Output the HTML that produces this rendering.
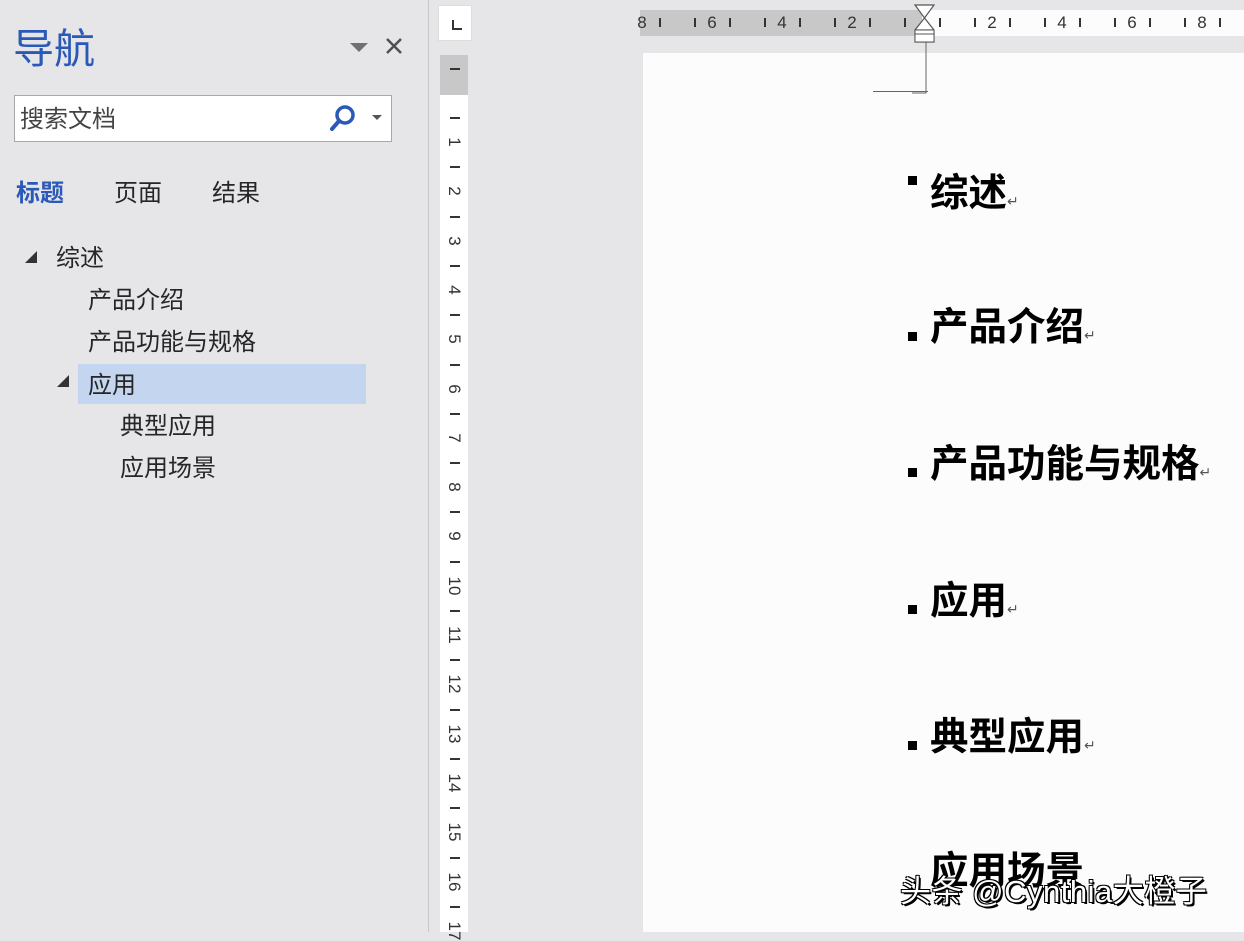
<!DOCTYPE html>
<html><head><meta charset="utf-8"><style>
*{margin:0;padding:0;box-sizing:border-box}
body{width:1244px;height:932px;overflow:hidden;background:#e6e5e8;position:relative;font-family:"Liberation Sans","Noto Sans CJK SC",sans-serif}
.a{position:absolute}
.nav{left:0;top:0;width:429px;height:932px;background:#e6e5e8;border-right:1px solid #c9c8cb}
.t{font-size:24px;color:#262626;white-space:nowrap;line-height:1.2}
.h{font-family:"Liberation Sans","Noto Sans CJK SC",sans-serif;font-weight:bold;font-size:38.5px;color:#000;white-space:nowrap;line-height:1}
.b{width:9px;height:9px;background:#000}
.rn{font-size:17px;color:#333;line-height:1}
.vt{width:10px;height:2px;background:#333;left:450px}
.ht{width:2px;height:9px;background:#333;top:18px}
.tri{width:0;height:0;border-left:12px solid transparent;border-bottom:12px solid #333}
</style></head><body>
<div class="a nav"></div>
<div class="a" style="left:13px;top:29px;font-size:41px;color:#2b59b8;line-height:1">导航</div>
<div class="a" style="left:350px;top:43px;width:0;height:0;border-left:9px solid transparent;border-right:9px solid transparent;border-top:9px solid #707070"></div>
<svg class="a" style="left:384px;top:36px" width="20" height="20"><path d="M3 3L17 17M17 3L3 17" stroke="#505050" stroke-width="2.5"/></svg>
<div class="a" style="left:14px;top:95px;width:378px;height:47px;background:#fff;border:1px solid #a8a8a8"></div>
<div class="a t" style="left:20px;top:106px;color:#444">搜索文档</div>
<svg class="a" style="left:328px;top:103px" width="32" height="30"><circle cx="17" cy="12" r="8" fill="none" stroke="#2b59b8" stroke-width="3.5"/><path d="M11 18L4 26" stroke="#2b59b8" stroke-width="4" stroke-linecap="round"/></svg>
<div class="a" style="left:372px;top:115px;width:0;height:0;border-left:5px solid transparent;border-right:5px solid transparent;border-top:5px solid #555"></div>
<div class="a t" style="left:16px;top:180px;color:#2b59b8;font-weight:bold">标题</div>
<div class="a t" style="left:114px;top:180px">页面</div>
<div class="a t" style="left:212px;top:180px">结果</div>
<div class="a tri" style="left:25px;top:251px"></div>
<div class="a t" style="left:56px;top:245px">综述</div>
<div class="a t" style="left:88px;top:287px">产品介绍</div>
<div class="a t" style="left:88px;top:329px">产品功能与规格</div>
<div class="a" style="left:78px;top:364px;width:288px;height:40px;background:#c3d5ef"></div>
<div class="a tri" style="left:57px;top:375px"></div>
<div class="a t" style="left:88px;top:372px">应用</div>
<div class="a t" style="left:120px;top:413px">典型应用</div>
<div class="a t" style="left:120px;top:455px">应用场景</div>
<!-- vertical ruler -->
<div class="a" style="left:438px;top:5px;width:34px;height:36px;background:#fff;border:1px solid #ddd"></div>
<div class="a" style="left:452px;top:20px;width:10px;height:10px;border-left:2px solid #333;border-bottom:2px solid #333"></div>
<div class="a" style="left:440px;top:55px;width:28px;height:877px;background:#fff"></div>
<div class="a" style="left:440px;top:55px;width:28px;height:40px;background:#c8c8c8"></div>
<div class="a vt" style="top:68px"></div>
<div id="vr"></div>
<!-- page -->
<div class="a" style="left:643px;top:53px;width:601px;height:879px;background:#fdfcfd"></div>
<div class="a" style="left:640px;top:10px;width:282px;height:26px;background:#c8c8c8"></div>
<div class="a" style="left:922px;top:10px;width:322px;height:26px;background:#fdfcfd"></div>
<div id="hr"></div>
<svg class="a" style="left:912px;top:2px" width="30" height="92"><path d="M3 3H22L12.5 16Z M12.5 16L3 28V40H22V28Z M3 28H22" fill="#fff" stroke="#555" stroke-width="1.2"/><path d="M3 28V40H22V28Z" fill="#fff" stroke="#555"/><path d="M3 32H22" stroke="#555"/><path d="M14 40V91H-40" fill="none" stroke="#666"/></svg>
<div class="a" style="left:873px;top:91px;width:55px;height:1px;background:#666"></div>
<div class="a b" style="left:908px;top:176px"></div><div class="a h" style="left:930px;top:175px">综述<span style="font-size:14px;font-weight:normal;color:#555">↵</span></div>
<div class="a b" style="left:908px;top:332px"></div><div class="a h" style="left:930px;top:309px">产品介绍<span style="font-size:14px;font-weight:normal;color:#555">↵</span></div>
<div class="a b" style="left:908px;top:468px"></div><div class="a h" style="left:930px;top:446px">产品功能与规格<span style="font-size:14px;font-weight:normal;color:#555">↵</span></div>
<div class="a b" style="left:908px;top:605px"></div><div class="a h" style="left:930px;top:583px">应用<span style="font-size:14px;font-weight:normal;color:#555">↵</span></div>
<div class="a b" style="left:908px;top:741px"></div><div class="a h" style="left:930px;top:719px">典型应用<span style="font-size:14px;font-weight:normal;color:#555">↵</span></div>
<div class="a h" style="left:930px;top:853px">应用场景</div>
<div class="a" style="left:900px;top:866px;font-size:31px;letter-spacing:0.5px;color:#fff;white-space:nowrap;text-shadow:-1px -1px 0 #000,1px -1px 0 #000,-1px 1px 0 #000,1px 1px 0 #000,2px 2px 0 #000">头条 @Cynthia大橙子</div>
<script>
var v='';
for(var n=1;n<=17;n++){var y=142+(n-1)*49.3;
v+='<div class="a rn" style="left:444px;top:'+(y-9)+'px;width:20px;height:18px;text-align:center;transform:rotate(90deg)">'+n+'</div>';
v+='<div class="a vt" style="top:'+(y-25)+'px"></div>';}
document.getElementById('vr').innerHTML=v;
var h='';
for(var m=-16;m<=18;m++){var x=922+17.5*m;if(x<642||x>1240)continue;
if(m%4==0&&m!=0){h+='<div class="a rn" style="left:'+(x-5)+'px;top:14px;width:10px;text-align:center">'+Math.abs(m/2)+'</div>';}
else if(m%2!=0){h+='<div class="a ht" style="left:'+(x-1)+'px"></div>';}}
document.getElementById('hr').innerHTML=h;
</script>
</body></html>
